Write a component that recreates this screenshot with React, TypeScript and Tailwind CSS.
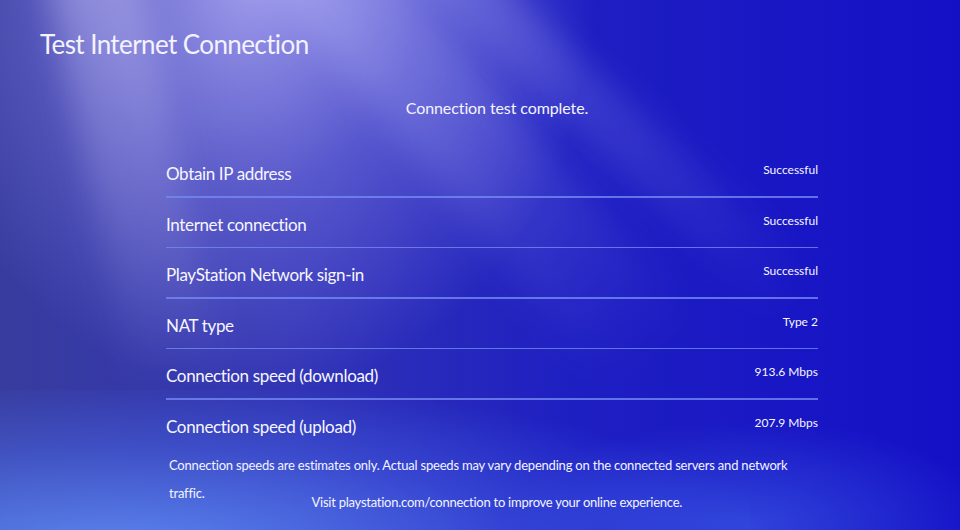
import React from 'react';

interface ResultRow {
  label: string;
  value: string;
}

const rows: ResultRow[] = [
  { label: 'Obtain IP address', value: 'Successful' },
  { label: 'Internet connection', value: 'Successful' },
  { label: 'PlayStation Network sign-in', value: 'Successful' },
  { label: 'NAT type', value: 'Type 2' },
  { label: 'Connection speed (download)', value: '913.6 Mbps' },
  { label: 'Connection speed (upload)', value: '207.9 Mbps' },
];

const Backdrop: React.FC = () => (
  <div className="absolute inset-0 overflow-hidden pointer-events-none">
    <div className="absolute inset-0 bg-[linear-gradient(90deg,#383c9e_0%,#3134b4_30%,#1e1fc2_60%,#1410c6_100%)]" />
    {/* light rays from top-left */}
    <div className="absolute -left-[100px] -top-[200px] w-[700px] h-[600px] bg-[radial-gradient(ellipse_at_50%_30%,rgba(195,190,255,0.75)_0%,rgba(150,145,240,0.4)_35%,rgba(120,120,230,0)_70%)]" />
    <div className="absolute left-[200px] -top-[120px] w-[110px] h-[720px] rotate-[-40deg] origin-top bg-[linear-gradient(180deg,rgba(200,200,255,0.4),rgba(160,160,255,0)_85%)] blur-[18px]" />
    <div className="absolute left-[340px] -top-[100px] w-[60px] h-[650px] rotate-[-47deg] origin-top bg-[linear-gradient(180deg,rgba(200,200,255,0.3),rgba(160,160,255,0)_90%)] blur-[14px]" />
    <div className="absolute left-[40px] -top-[60px] w-[90px] h-[500px] rotate-[-12deg] origin-top bg-[linear-gradient(180deg,rgba(220,215,255,0.4),rgba(160,160,255,0)_90%)] blur-[16px]" />
    {/* bottom glow */}
    <div className="absolute -left-[150px] top-[390px] w-[900px] h-[260px] bg-[radial-gradient(ellipse_at_30%_60%,rgba(100,150,255,0.8)_0%,rgba(80,120,250,0.35)_45%,rgba(60,90,240,0)_75%)]" />
    <div className="absolute left-[500px] top-[420px] w-[500px] h-[150px] bg-[radial-gradient(ellipse_at_50%_70%,rgba(70,110,240,0.5)_0%,rgba(60,90,230,0)_70%)]" />
  </div>
);

export default function App() {
  return (
    <div className="relative w-[960px] h-[530px] overflow-hidden text-white font-['Lato',sans-serif]">
      <Backdrop />
      <div className="relative flex flex-col h-full">
        <h1 className="pl-[40px] pt-[28px] text-[26px] leading-[32px] tracking-[-0.6px] text-[#f4f2ff]">
          Test Internet Connection
        </h1>
        <p className="mt-[37px] text-center pl-[34px] text-[16px] leading-[22px] tracking-[-0.1px] text-[#f4f4ff]">
          Connection test complete.
        </p>
        <div className="mt-[28px] ml-[166px] w-[652px] flex flex-col">
          {rows.map((row, i) => (
            <div key={row.label} className="flex flex-col">
              <div className="h-[49px] flex justify-between items-start">
                <span className="pt-[15px] text-[17px] leading-[24px] tracking-[-0.35px] text-[#f6f6ff]">{row.label}</span>
                <span className="pt-[14px] text-[12px] leading-[18px] text-[#f6f6ff]">{row.value}</span>
              </div>
              {i < rows.length - 1 && <div className="h-[1.5px] bg-[#7488f4]/80" />}
            </div>
          ))}
        </div>
        <div className="mt-[3px] ml-[169px] w-[620px] flex flex-col text-[13px] tracking-[-0.2px] text-[#f2f4ff]">
          <p className="leading-[27px] whitespace-nowrap">
            Connection speeds are estimates only. Actual speeds may vary depending on the connected servers and network
          </p>
          <div className="flex items-start pt-[4px]">
            <span className="leading-[20px]">traffic.</span>
            <span className="flex-1 pt-[9px] text-center leading-[20px] tracking-[-0.25px]">
              Visit playstation.com/connection to improve your online experience.
            </span>
          </div>
        </div>
      </div>
    </div>
  );
}
